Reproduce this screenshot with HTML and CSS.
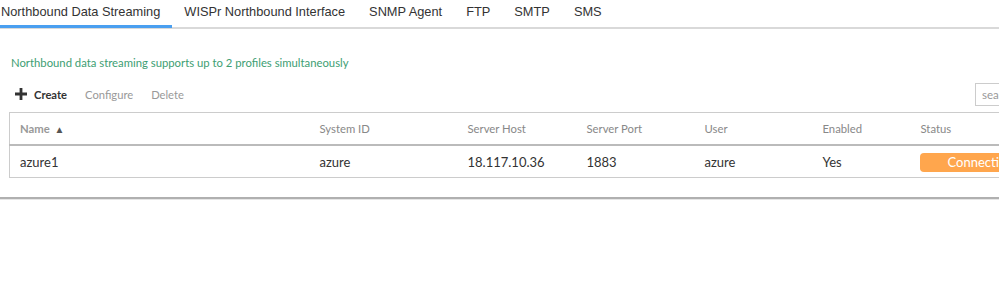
FILE: index.html
```html
<!DOCTYPE html>
<html>

<head>
    <meta charset="UTF-8">
    <meta name="viewport" content="width=device-width, initial-scale=1.0">
    <title>Northbound Data Streaming</title>
    <link rel="stylesheet" href="styles.css">
</head>

<body>

    <div class="page">
        <ul class="tabs">
            <li class="active">Northbound Data Streaming</li>
            <li>WISPr Northbound Interface</li>
            <li>SNMP Agent</li>
            <li>FTP</li>
            <li>SMTP</li>
            <li>SMS</li>
        </ul>

        <div class="panel">
            <p class="note">Northbound data streaming supports up to 2 profiles simultaneously</p>

            <div class="toolbar">
                <button class="create">
                    <svg width="12" height="12" viewBox="0 0 12 12"><path d="M4.6 0h2.8v4.6H12v2.8H7.4V12H4.6V7.4H0V4.6h4.6z" fill="#333"/></svg>
                    Create
                </button>
                <button>Configure</button>
                <button>Delete</button>
                <input type="text" class="search" placeholder="search">
            </div>

            <table class="grid">
                <colgroup>
                    <col style="width: 300px">
                    <col style="width: 148px">
                    <col style="width: 119px">
                    <col style="width: 118px">
                    <col style="width: 118px">
                    <col style="width: 98px">
                    <col style="width: 160px">
                </colgroup>
                <thead>
                    <tr>
                        <th class="sorted">Name <span class="arrow">&#9650;</span></th>
                        <th>System ID</th>
                        <th>Server Host</th>
                        <th>Server Port</th>
                        <th>User</th>
                        <th>Enabled</th>
                        <th>Status</th>
                    </tr>
                </thead>
                <tbody>
                    <tr>
                        <td>azure1</td>
                        <td>azure</td>
                        <td>18.117.10.36</td>
                        <td>1883</td>
                        <td>azure</td>
                        <td>Yes</td>
                        <td><span class="badge">Connecting</span></td>
                    </tr>
                </tbody>
            </table>
        </div>

        <div class="footer-line"></div>
    </div>

</body>
</html>
```

FILE: styles.css
```css
*{
    margin: 0px;
    padding: 0px;
    box-sizing: border-box;
}
body{
    overflow: hidden;
    background: #fff;
    font-family: Lato, "Liberation Sans", sans-serif;
}
.page{
    width: 1200px;
}
.tabs{
    list-style: none;
    display: flex;
    margin-left: -11px;
    border-bottom: 2px solid #d9d9d9;
    height: 29px;
}
.tabs li{
    font-family: "Liberation Sans", Arial, sans-serif;
    font-size: 12.8px;
    color: #333;
    padding: 4px 12px 0px 12px;
    height: 29px;
}
.tabs li.active{
    border-bottom: 3px solid #4a9ff0;
    height: 28px;
}
.panel{
    padding: 27px 0px 0px 9px;
}
.note{
    font-size: 11.3px;
    color: #3d9e73;
    padding-left: 2px;
    height: 20px;
}
.toolbar{
    display: flex;
    align-items: center;
    height: 36px;
    padding-left: 6px;
}
.toolbar button{
    border: none;
    background: none;
    font-family: inherit;
    font-size: 11.2px;
    color: #999;
    margin-right: 18px;
    display: flex;
    align-items: center;
    gap: 7px;
}
.toolbar button.create{
    color: #333;
    font-weight: bold;
}
.search{
    margin-left: auto;
    margin-right: 165px;
    width: 60px;
    height: 23px;
    border: 1px solid #ccc;
    padding-left: 6px;
    font-family: inherit;
    font-size: 11.5px;
}
.search::placeholder{
    color: #999;
}
.grid{
    border-collapse: collapse;
    table-layout: fixed;
    width: 1061px;
    border: 1px solid #ccc;
}
.grid th{
    text-align: left;
    font-weight: normal;
    font-size: 11.3px;
    color: #888;
    height: 32px;
    padding-left: 10px;
    border-bottom: 2px solid #bbb;
}
.grid th.sorted{
    font-weight: bold;
    color: #999;
}
.arrow{
    font-size: 10px;
    color: #555;
    margin-left: 2px;
}
.grid td{
    font-size: 13px;
    color: #333;
    height: 33px;
    padding-left: 10px;
    padding-top: 2px;
    border-bottom: 1px solid #ccc;
}
.badge{
    display: block;
    background: #ffa64d;
    color: #fff;
    border-radius: 4px;
    height: 19px;
    line-height: 19px;
    padding-left: 28px;
    margin-left: -1px;
    font-size: 13px;
}
.footer-line{
    margin-top: 19px;
    border-top: 2px solid #b0b0b0;
    border-bottom: 1px solid #e6e6e6;
}
```
